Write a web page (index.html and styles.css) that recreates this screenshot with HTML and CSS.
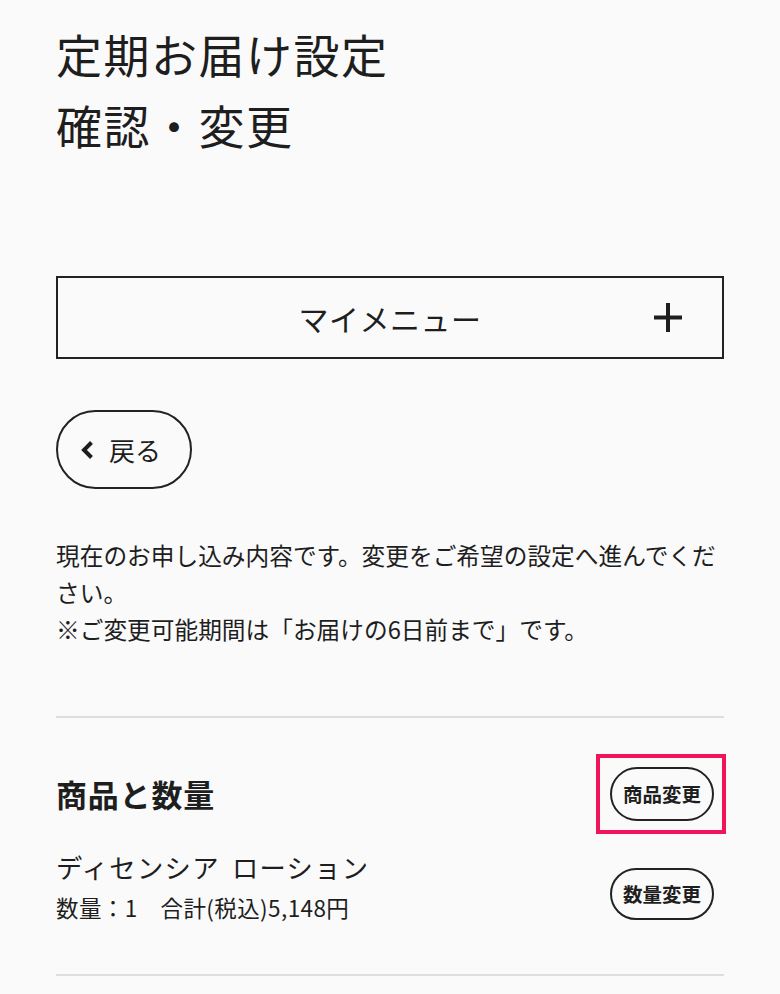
FILE: index.html
```html
<!DOCTYPE html>
<html lang="ja">
<head>
<meta charset="utf-8">
<title>定期お届け設定 確認・変更</title>
<link rel="stylesheet" href="styles.css">
</head>
<body>
<main class="page">
  <h1 class="title">定期お届け設定<br>確認・変更</h1>

  <button class="mymenu" type="button">
    <span class="mymenu-label">マイメニュー</span>
    <svg class="mymenu-plus" width="28" height="29" viewBox="0 0 28 29" aria-hidden="true">
      <path d="M0 14.5H28M14 0V29" stroke="#1e1e1e" stroke-width="4" fill="none"/>
    </svg>
  </button>

  <a class="back" href="#">
    <svg class="back-chevron" width="14" height="20" viewBox="0 0 14 20" aria-hidden="true">
      <polyline points="11.5,2.5 4,10 11.5,17.5" stroke="#1e1e1e" stroke-width="4" fill="none" stroke-linecap="butt" stroke-linejoin="miter"/>
    </svg>
    <span>戻る</span>
  </a>

  <p class="lead">現在のお申し込み内容です。変更をご希望の設定へ進んでください。<br>※ご変更可能期間は「お届けの6日前まで」です。</p>

  <section class="section">
    <div class="section-head">
      <h2 class="section-title">商品と数量</h2>
      <div class="highlight-wrap">
        <button class="pill" type="button">商品変更</button>
        <span class="highlight"></span>
      </div>
    </div>
    <div class="product-row">
      <div class="product-info">
        <div class="product-name">ディセンシア ローション</div>
        <div class="product-qty">数量：1　合計(税込)5,148円</div>
      </div>
      <button class="pill pill-qty" type="button">数量変更</button>
    </div>
  </section>
</main>
</body>
</html>
```
FILE: styles.css
```css
html, body {
  margin: 0;
  padding: 0;
  background: #fafafa;
}

body {
  font-family: "Noto Sans CJK JP", "Noto Sans", sans-serif;
  color: #1e1e1e;
}

.page {
  padding: 18px 56px 0;
}

.title {
  margin: 0;
  font-size: 46px;
  line-height: 71px;
  font-weight: 400;
  letter-spacing: 1.5px;
}

.mymenu {
  margin-top: 116px;
  width: 100%;
  height: 83px;
  box-sizing: border-box;
  border: 2px solid #222;
  background: #fafafa;
  display: grid;
  grid-template-columns: 1fr auto 1fr;
  align-items: center;
  padding: 0;
  font-family: inherit;
  color: #1e1e1e;
}

.mymenu-label {
  grid-column: 2;
  font-size: 30px;
  line-height: 1;
  letter-spacing: 0.5px;
  padding-top: 1px;
}

.mymenu-plus {
  grid-column: 3;
  justify-self: end;
  margin-right: 40px;
}

.back {
  margin-top: 51px;
  width: 136px;
  height: 79px;
  box-sizing: border-box;
  border: 2px solid #222;
  border-radius: 40px;
  display: flex;
  align-items: center;
  padding-left: 22px;
  gap: 15px;
  color: #1e1e1e;
  text-decoration: none;
  font-size: 26px;
}

.back-chevron {
  margin-top: 0;
}

.lead {
  margin: 48px 0 0;
  font-size: 23.7px;
  line-height: 37px;
}

.section {
  margin-top: 68px;
  border-top: 2px solid #dedee0;
  border-bottom: 2px solid #dedee0;
  padding: 49px 0 47px;
}

.section-head {
  display: flex;
  justify-content: space-between;
  align-items: center;
}

.section-title {
  margin: 0;
  font-size: 31px;
  font-weight: 700;
  line-height: 40px;
  letter-spacing: 0.8px;
}

.highlight-wrap {
  position: relative;
  margin-right: 10px;
}

.highlight {
  position: absolute;
  left: -14px;
  top: -13px;
  right: -12px;
  bottom: -13px;
  border: 4.5px solid #f0145a;
  pointer-events: none;
}

.pill {
  display: block;
  width: 104px;
  height: 54px;
  box-sizing: border-box;
  border: 2px solid #222;
  border-radius: 27px;
  background: #fafafa;
  font-family: inherit;
  font-size: 19.5px;
  font-weight: 700;
  color: #1e1e1e;
  padding: 0;
  line-height: 1;
}

.product-row {
  margin-top: 26px;
  display: flex;
  justify-content: space-between;
  align-items: center;
}

.product-name {
  font-size: 26.3px;
  line-height: 40px;
  letter-spacing: 1.3px;
  word-spacing: 5px;
}

.product-qty {
  font-size: 22.5px;
  line-height: 40px;
  letter-spacing: 0.4px;
}

.pill-qty {
  height: 52px;
  margin-top: 14px;
  margin-right: 10px;
}
```
